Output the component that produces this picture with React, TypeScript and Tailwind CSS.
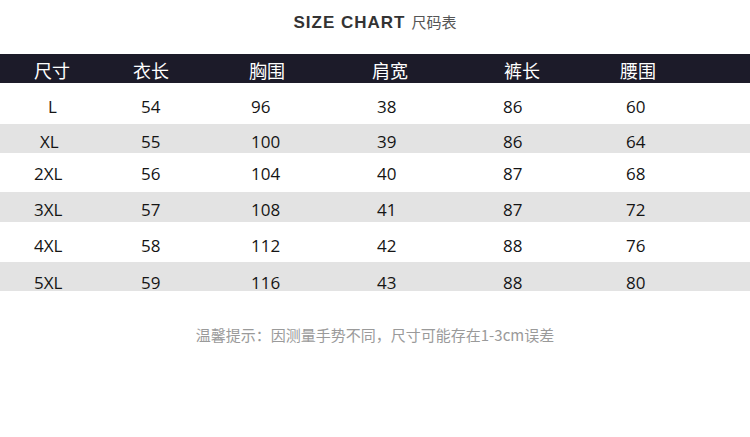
import React from "react";

const rows = [
  { s: "L", sp: "pl-[48px]", v: ["54", "96", "38", "86", "60"], h: "h-[41px] pt-[15px] bg-white" },
  { s: "XL", sp: "pl-[40px]", v: ["55", "100", "39", "86", "64"], h: "h-[29px] pt-[9px] bg-[#e3e3e3]" },
  { s: "2XL", sp: "pl-[34px]", v: ["56", "104", "40", "87", "68"], h: "h-[39px] pt-[12px] bg-white" },
  { s: "3XL", sp: "pl-[34px]", v: ["57", "108", "41", "87", "72"], h: "h-[30px] pt-[9px] bg-[#e3e3e3]" },
  { s: "4XL", sp: "pl-[34px]", v: ["58", "112", "42", "88", "76"], h: "h-[40px] pt-[15px] bg-white" },
  { s: "5XL", sp: "pl-[34px]", v: ["59", "116", "43", "88", "80"], h: "h-[29px] pt-[12px] bg-[#e3e3e3]" },
];

const headers = ["衣长", "胸围", "肩宽", "裤长", "腰围"];
const headerPad = ["pl-[30px]", "pl-[19px]", "pl-[22px]", "pl-[24px]", "pl-[20px]"];
const valuePad = ["pl-[38px]", "pl-[21px]", "pl-[27px]", "pl-[23px]", "pl-[26px]"];

const grid = "grid grid-cols-[103px_127px_120px_130px_120px_1fr]";

export default function App() {
  return (
    <div className="w-[750px] h-[437px] bg-white flex flex-col overflow-hidden">
      <div className="pt-[13px] flex justify-center items-baseline leading-[17px]">
        <span
          className="text-[17px] font-bold tracking-[1px] text-[#333]"
          style={{ fontFamily: '"Liberation Sans", Arial, sans-serif' }}
        >
          SIZE CHART
        </span>
        <span
          className="ml-[6px] text-[15px] text-[#555]"
          style={{ fontFamily: '"Noto Sans CJK SC", sans-serif' }}
        >
          尺码表
        </span>
      </div>

      <div className="mt-[23px] w-[750px]">
        <div
          className={`${grid} h-[29px] items-center bg-[#1c1b29] text-white text-[18px] leading-[18px]`}
          style={{ fontFamily: '"Noto Sans CJK SC", sans-serif' }}
        >
          <div className="pl-[34px] pt-[2px]">尺寸</div>
          {headers.map((h, i) => (
            <div key={h} className={`${headerPad[i]} pt-[2px]`}>
              {h}
            </div>
          ))}
        </div>
        {rows.map((r) => (
          <div
            key={r.s}
            className={`${grid} ${r.h} items-start text-[17px] leading-[17px] text-[#151515]`}
            style={{ fontFamily: '"Open Sans", sans-serif' }}
          >
            <div className={r.sp}>{r.s}</div>
            {r.v.map((v, i) => (
              <div key={i} className={valuePad[i]}>
                {v}
              </div>
            ))}
          </div>
        ))}
      </div>

      <div
        className="mt-[36px] text-center text-[15px] leading-[15px] text-[#9a9a9a]"
        style={{ fontFamily: '"Noto Sans CJK SC", sans-serif' }}
      >
        温馨提示：因测量手势不同，尺寸可能存在1-3cm误差
      </div>
    </div>
  );
}
